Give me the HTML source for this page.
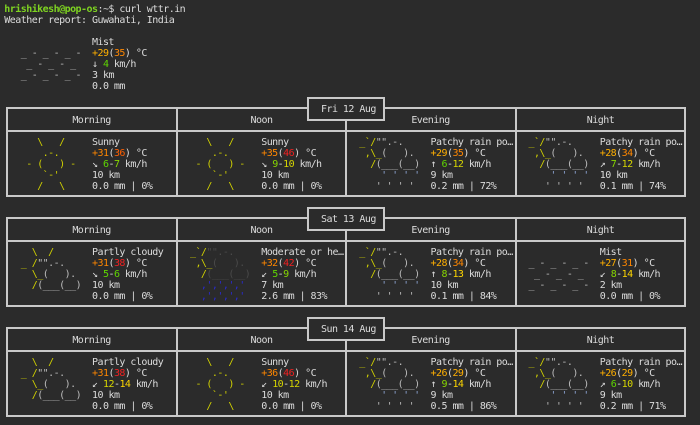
<!DOCTYPE html>
<html><head><meta charset="utf-8">
<style>
html,body{margin:0;padding:0;}
body{width:700px;height:425px;background:#2b2b2b;position:relative;overflow:hidden;font-family:"DejaVu Sans Mono","Liberation Mono",monospace;font-size:10px;letter-spacing:-0.54px;color:#dcdcdc;}
pre{margin:0;position:absolute;font:inherit;letter-spacing:inherit;line-height:11px;white-space:pre;}
.t{position:absolute;box-sizing:border-box;border:2px solid #c9c9c9;}
.h{position:absolute;height:2px;background:#c9c9c9;}
.v{position:absolute;width:2px;background:#c9c9c9;}
.db{position:absolute;box-sizing:border-box;border:2px solid #c9c9c9;background:#2b2b2b;z-index:3;width:78px;height:24px;left:307px;}
.hd{position:absolute;width:169px;text-align:center;line-height:11px;}
.y{color:#d2d200}.g{color:#bdbdbd}.dk{color:#4a4a4a}.b{color:#2a2ad0}.lb{color:#8ea6d6}
.t1{color:#ffaf00}.t2{color:#ff8700}.t3{color:#ff5f00}.t4{color:#f02020}
.w1{color:#5fd700}.w2{color:#87d700}.w3{color:#d7d700}.w4{color:#ffd700}
.gr{color:#7ed321;font-weight:bold}
</style></head><body>

<pre style="left:4.3px;top:4px;"><span class="gr">hrishikesh@pop-os</span>:~$ curl wttr.in
Weather report: Guwahati, India

                Mist
   <span class="g">_ - _ - _ -</span>  <span class="t1">+29</span>(<span class="t2">35</span>) °C
    <span class="g">_ - _ - _</span>   ↓ <span class="w1">4</span> km/h
   <span class="g">_ - _ - _ -</span>  3 km
                0.0 mm</pre>

<!-- Day 1 -->
<div class="t" style="left:6px;top:107px;width:680px;height:90px"></div>
<div class="h" style="left:6px;top:129.5px;width:680px"></div>
<div class="v" style="left:175.6px;top:107px;height:90px"></div>
<div class="v" style="left:345.2px;top:107px;height:90px"></div>
<div class="v" style="left:514.8px;top:107px;height:90px"></div>
<div class="db" style="top:97px"></div>
<pre style="left:321px;top:103.5px;z-index:4">Fri 12 Aug</pre>
<div class="hd" style="left:7px;top:114.5px">Morning</div>
<div class="hd" style="left:177px;top:114.5px">Noon</div>
<div class="hd" style="left:346px;top:114.5px">Evening</div>
<div class="hd" style="left:516px;top:114.5px">Night</div>

<pre style="left:9.8px;top:136.5px"><span class="y">     \   /     </span>Sunny
<span class="y">      .-.      </span><span class="t2">+31</span>(<span class="t3">36</span>) °C
<span class="y">   - (   ) -   </span>↘ <span class="w1">6</span>-<span class="w2">7</span> km/h
<span class="y">      `-'      </span>10 km
<span class="y">     /   \     </span>0.0 mm | 0%</pre>
<pre style="left:179px;top:136.5px"><span class="y">     \   /     </span>Sunny
<span class="y">      .-.      </span><span class="t2">+35</span>(<span class="t4">46</span>) °C
<span class="y">   - (   ) -   </span>↘ <span class="w2">9</span>-<span class="w3">10</span> km/h
<span class="y">      `-'      </span>10 km
<span class="y">     /   \     </span>0.0 mm | 0%</pre>
<pre style="left:348.3px;top:136.5px"><span class="y">  _`/</span><span class="g">"".-.     </span>Patchy rain po…
<span class="y">   ,\_</span><span class="g">(   ).   </span><span class="t1">+29</span>(<span class="t2">35</span>) °C
<span class="y">    /</span><span class="g">(___(__)  </span>↑ <span class="w1">6</span>-<span class="w3">12</span> km/h
<span class="lb">      ' ' ' '  </span>9 km
<span class="g">     ' ' ' '   </span>0.2 mm | 72%</pre>
<pre style="left:517.5px;top:136.5px"><span class="y">  _`/</span><span class="g">"".-.     </span>Patchy rain po…
<span class="y">   ,\_</span><span class="g">(   ).   </span><span class="t1">+28</span>(<span class="t2">34</span>) °C
<span class="y">    /</span><span class="g">(___(__)  </span>↗ <span class="w2">7</span>-<span class="w3">12</span> km/h
<span class="lb">      ' ' ' '  </span>10 km
<span class="g">     ' ' ' '   </span>0.1 mm | 74%</pre>

<!-- Day 2 -->
<div class="t" style="left:6px;top:217px;width:680px;height:90px"></div>
<div class="h" style="left:6px;top:239.5px;width:680px"></div>
<div class="v" style="left:175.6px;top:217px;height:90px"></div>
<div class="v" style="left:345.2px;top:217px;height:90px"></div>
<div class="v" style="left:514.8px;top:217px;height:90px"></div>
<div class="db" style="top:207px"></div>
<pre style="left:321px;top:213.5px;z-index:4">Sat 13 Aug</pre>
<div class="hd" style="left:7px;top:224.5px">Morning</div>
<div class="hd" style="left:177px;top:224.5px">Noon</div>
<div class="hd" style="left:346px;top:224.5px">Evening</div>
<div class="hd" style="left:516px;top:224.5px">Night</div>

<pre style="left:9.8px;top:246.5px"><span class="y">    \  /       </span>Partly cloudy
<span class="y">  _ /</span><span class="g">"".-.     </span><span class="t2">+31</span>(<span class="t4">38</span>) °C
<span class="y">    \_</span><span class="g">(   ).   </span>↘ <span class="w1">5</span>-<span class="w1">6</span> km/h
<span class="y">    /</span><span class="g">(___(__)  </span>10 km
               0.0 mm | 0%</pre>
<pre style="left:179px;top:246.5px"><span class="y">  _`/</span><span class="dk">"".-.     </span>Moderate or he…
<span class="y">   ,\_</span><span class="dk">(   ).   </span><span class="t2">+32</span>(<span class="t4">42</span>) °C
<span class="y">    /</span><span class="dk">(___(__)  </span>↙ <span class="w1">5</span>-<span class="w2">9</span> km/h
<span class="b">    ‚'‚'‚'‚'   </span>7 km
<span class="b">    ‚'‚'‚'‚'   </span>2.6 mm | 83%</pre>
<pre style="left:348.3px;top:246.5px"><span class="y">  _`/</span><span class="g">"".-.     </span>Patchy rain po…
<span class="y">   ,\_</span><span class="g">(   ).   </span><span class="t1">+28</span>(<span class="t2">34</span>) °C
<span class="y">    /</span><span class="g">(___(__)  </span>↑ <span class="w2">8</span>-<span class="w4">13</span> km/h
<span class="lb">      ' ' ' '  </span>10 km
<span class="g">     ' ' ' '   </span>0.1 mm | 84%</pre>
<pre style="left:517.5px;top:246.5px">               Mist
<span class="g">  _ - _ - _ -  </span><span class="t1">+27</span>(<span class="t2">31</span>) °C
<span class="g">   _ - _ - _   </span>↙ <span class="w2">8</span>-<span class="w4">14</span> km/h
<span class="g">  _ - _ - _ -  </span>2 km
               0.0 mm | 0%</pre>

<!-- Day 3 -->
<div class="t" style="left:6px;top:327px;width:680px;height:90px"></div>
<div class="h" style="left:6px;top:349.5px;width:680px"></div>
<div class="v" style="left:175.6px;top:327px;height:90px"></div>
<div class="v" style="left:345.2px;top:327px;height:90px"></div>
<div class="v" style="left:514.8px;top:327px;height:90px"></div>
<div class="db" style="top:317px"></div>
<pre style="left:321px;top:323.5px;z-index:4">Sun 14 Aug</pre>
<div class="hd" style="left:7px;top:334.5px">Morning</div>
<div class="hd" style="left:177px;top:334.5px">Noon</div>
<div class="hd" style="left:346px;top:334.5px">Evening</div>
<div class="hd" style="left:516px;top:334.5px">Night</div>

<pre style="left:9.8px;top:356.5px"><span class="y">    \  /       </span>Partly cloudy
<span class="y">  _ /</span><span class="g">"".-.     </span><span class="t2">+31</span>(<span class="t4">38</span>) °C
<span class="y">    \_</span><span class="g">(   ).   </span>↙ <span class="w3">12</span>-<span class="w4">14</span> km/h
<span class="y">    /</span><span class="g">(___(__)  </span>10 km
               0.0 mm | 0%</pre>
<pre style="left:179px;top:356.5px"><span class="y">     \   /     </span>Sunny
<span class="y">      .-.      </span><span class="t2">+36</span>(<span class="t4">46</span>) °C
<span class="y">   - (   ) -   </span>↙ <span class="w3">10</span>-<span class="w3">12</span> km/h
<span class="y">      `-'      </span>10 km
<span class="y">     /   \     </span>0.0 mm | 0%</pre>
<pre style="left:348.3px;top:356.5px"><span class="y">  _`/</span><span class="g">"".-.     </span>Patchy rain po…
<span class="y">   ,\_</span><span class="g">(   ).   </span><span class="t1">+26</span>(<span class="t1">29</span>) °C
<span class="y">    /</span><span class="g">(___(__)  </span>↑ <span class="w2">9</span>-<span class="w4">14</span> km/h
<span class="lb">      ' ' ' '  </span>9 km
<span class="g">     ' ' ' '   </span>0.5 mm | 86%</pre>
<pre style="left:517.5px;top:356.5px"><span class="y">  _`/</span><span class="g">"".-.     </span>Patchy rain po…
<span class="y">   ,\_</span><span class="g">(   ).   </span><span class="t1">+26</span>(<span class="t1">29</span>) °C
<span class="y">    /</span><span class="g">(___(__)  </span>↗ <span class="w1">6</span>-<span class="w3">10</span> km/h
<span class="lb">      ' ' ' '  </span>9 km
<span class="g">     ' ' ' '   </span>0.2 mm | 71%</pre>
</body></html>
